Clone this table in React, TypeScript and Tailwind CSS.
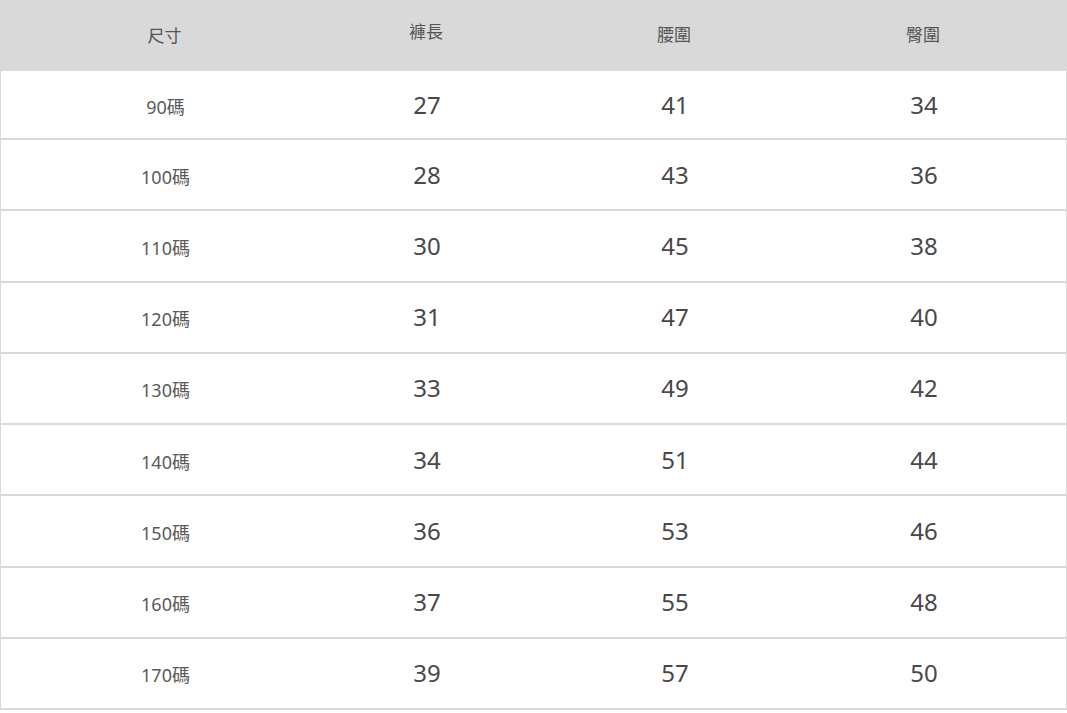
import React from 'react';

const rows = [
  ['90碼', '27', '41', '34'],
  ['100碼', '28', '43', '36'],
  ['110碼', '30', '45', '38'],
  ['120碼', '31', '47', '40'],
  ['130碼', '33', '49', '42'],
  ['140碼', '34', '51', '44'],
  ['150碼', '36', '53', '46'],
  ['160碼', '37', '55', '48'],
  ['170碼', '39', '57', '50'],
];

const cols = 'grid grid-cols-[329px_194px_302px_196px_1fr]';

function App() {
  return (
    <div className="min-h-screen bg-white font-['Noto_Sans','Noto_Sans_CJK_TC',sans-serif]">
      <div className="w-[1067px]">
        <div className={`${cols} h-[71px] items-center bg-[#d9d9d9] text-[17px] text-[#555]`}>
          <div className="text-center">尺寸</div>
          <div className="text-center -mt-[7px]">褲長</div>
          <div className="text-center -mt-[2px]">腰圍</div>
          <div className="text-center -mt-[2px]">臀圍</div>
          <div />
        </div>
        <div className="border-x border-b-2 border-[#d9d9d9]">
          {rows.map((r, i) => (
            <div
              key={i}
              className={`${cols} items-center ${i > 0 ? 'h-[71.25px] border-t-2 border-[#d9d9d9]' : 'h-[67px]'}`}
            >
              <div className="text-center text-[18px] text-[#5a5a5a] mt-[5px]">{r[0]}</div>
              <div className="text-center text-[24px] text-[#484848]">{r[1]}</div>
              <div className="text-center text-[24px] text-[#484848]">{r[2]}</div>
              <div className="text-center text-[24px] text-[#484848]">{r[3]}</div>
              <div />
            </div>
          ))}
        </div>
      </div>
    </div>
  );
}

export default App;
